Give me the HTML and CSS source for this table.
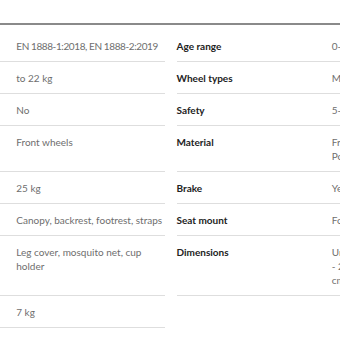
FILE: index.html
```html
<!DOCTYPE html>
<html lang="en">
<head>
    <meta charset="UTF-8">
    <meta name="viewport" content="width=device-width, initial-scale=1.0">
    <title>Specifications</title>
    <link rel="stylesheet" href="styles.css">
</head>
<body>
    <section class="specs">
        <table class="spec-table">
            <colgroup>
                <col class="col-label">
                <col class="col-value">
                <col class="col-gap">
                <col class="col-label">
                <col class="col-value">
            </colgroup>
            <tr>
                <th>Certification</th><td class="tight">EN 1888-1:2018, EN 1888-2:2019</td>
                <td class="gap"></td>
                <th>Age range</th><td>0-4 years</td>
            </tr>
            <tr>
                <th>Max load</th><td>to 22 kg</td>
                <td class="gap"></td>
                <th>Wheel types</th><td>Metal, EVA foam</td>
            </tr>
            <tr>
                <th>Reversible seat</th><td>No</td>
                <td class="gap"></td>
                <th>Safety</th><td>5-point harness</td>
            </tr>
            <tr>
                <th>Suspension</th><td>Front wheels</td>
                <td class="gap"></td>
                <th>Material</th><td>Frame: aluminium<br>Polyester fabric</td>
            </tr>
            <tr>
                <th>Max weight</th><td>25 kg</td>
                <td class="gap"></td>
                <th>Brake</th><td>Yes, foot brake</td>
            </tr>
            <tr>
                <th>Adjustable</th><td>Canopy, backrest, footrest, straps</td>
                <td class="gap"></td>
                <th>Seat mount</th><td>Forward facing</td>
            </tr>
            <tr>
                <th>Included</th><td>Leg cover, mosquito net, cup holder</td>
                <td class="gap"></td>
                <th>Dimensions</th><td>Unfolded: 85 x 48 x 103<br>- 25 x 48 x 58<br>cm folded</td>
            </tr>
            <tr>
                <th>Weight</th><td>7 kg</td>
                <td class="gap"></td>
                <td class="empty"></td><td class="empty"></td>
            </tr>
        </table>
    </section>
</body>
</html>
```

FILE: styles.css
```css
body {
    margin: 0;
    padding: 0;
    background: #ffffff;
    font-family: 'Lato', sans-serif;
    overflow: hidden;
}

.specs {
    margin-top: 23px;
    margin-left: -139px;
    width: 620px;
    border-top: 2px solid #8a8a8a;
    padding-top: 5px;
}

.spec-table {
    width: 620px;
    table-layout: fixed;
    border-collapse: collapse;
    font-size: 10px;
    line-height: 14px;
}

.col-label {
    width: 155px;
}

.col-value {
    width: 149px;
}

.col-gap {
    width: 11px;
}

.spec-table th,
.spec-table td {
    text-align: left;
    vertical-align: top;
    padding: 9px 0 8px;
    border-bottom: 1px solid #dedede;
}

.spec-table th {
    color: #222222;
    font-weight: 700;
}

.spec-table td {
    color: #6e6e6e;
}

.spec-table td.tight {
    letter-spacing: -0.4px;
}

.spec-table td.gap,
.spec-table td.empty {
    border-bottom: none;
}
```
